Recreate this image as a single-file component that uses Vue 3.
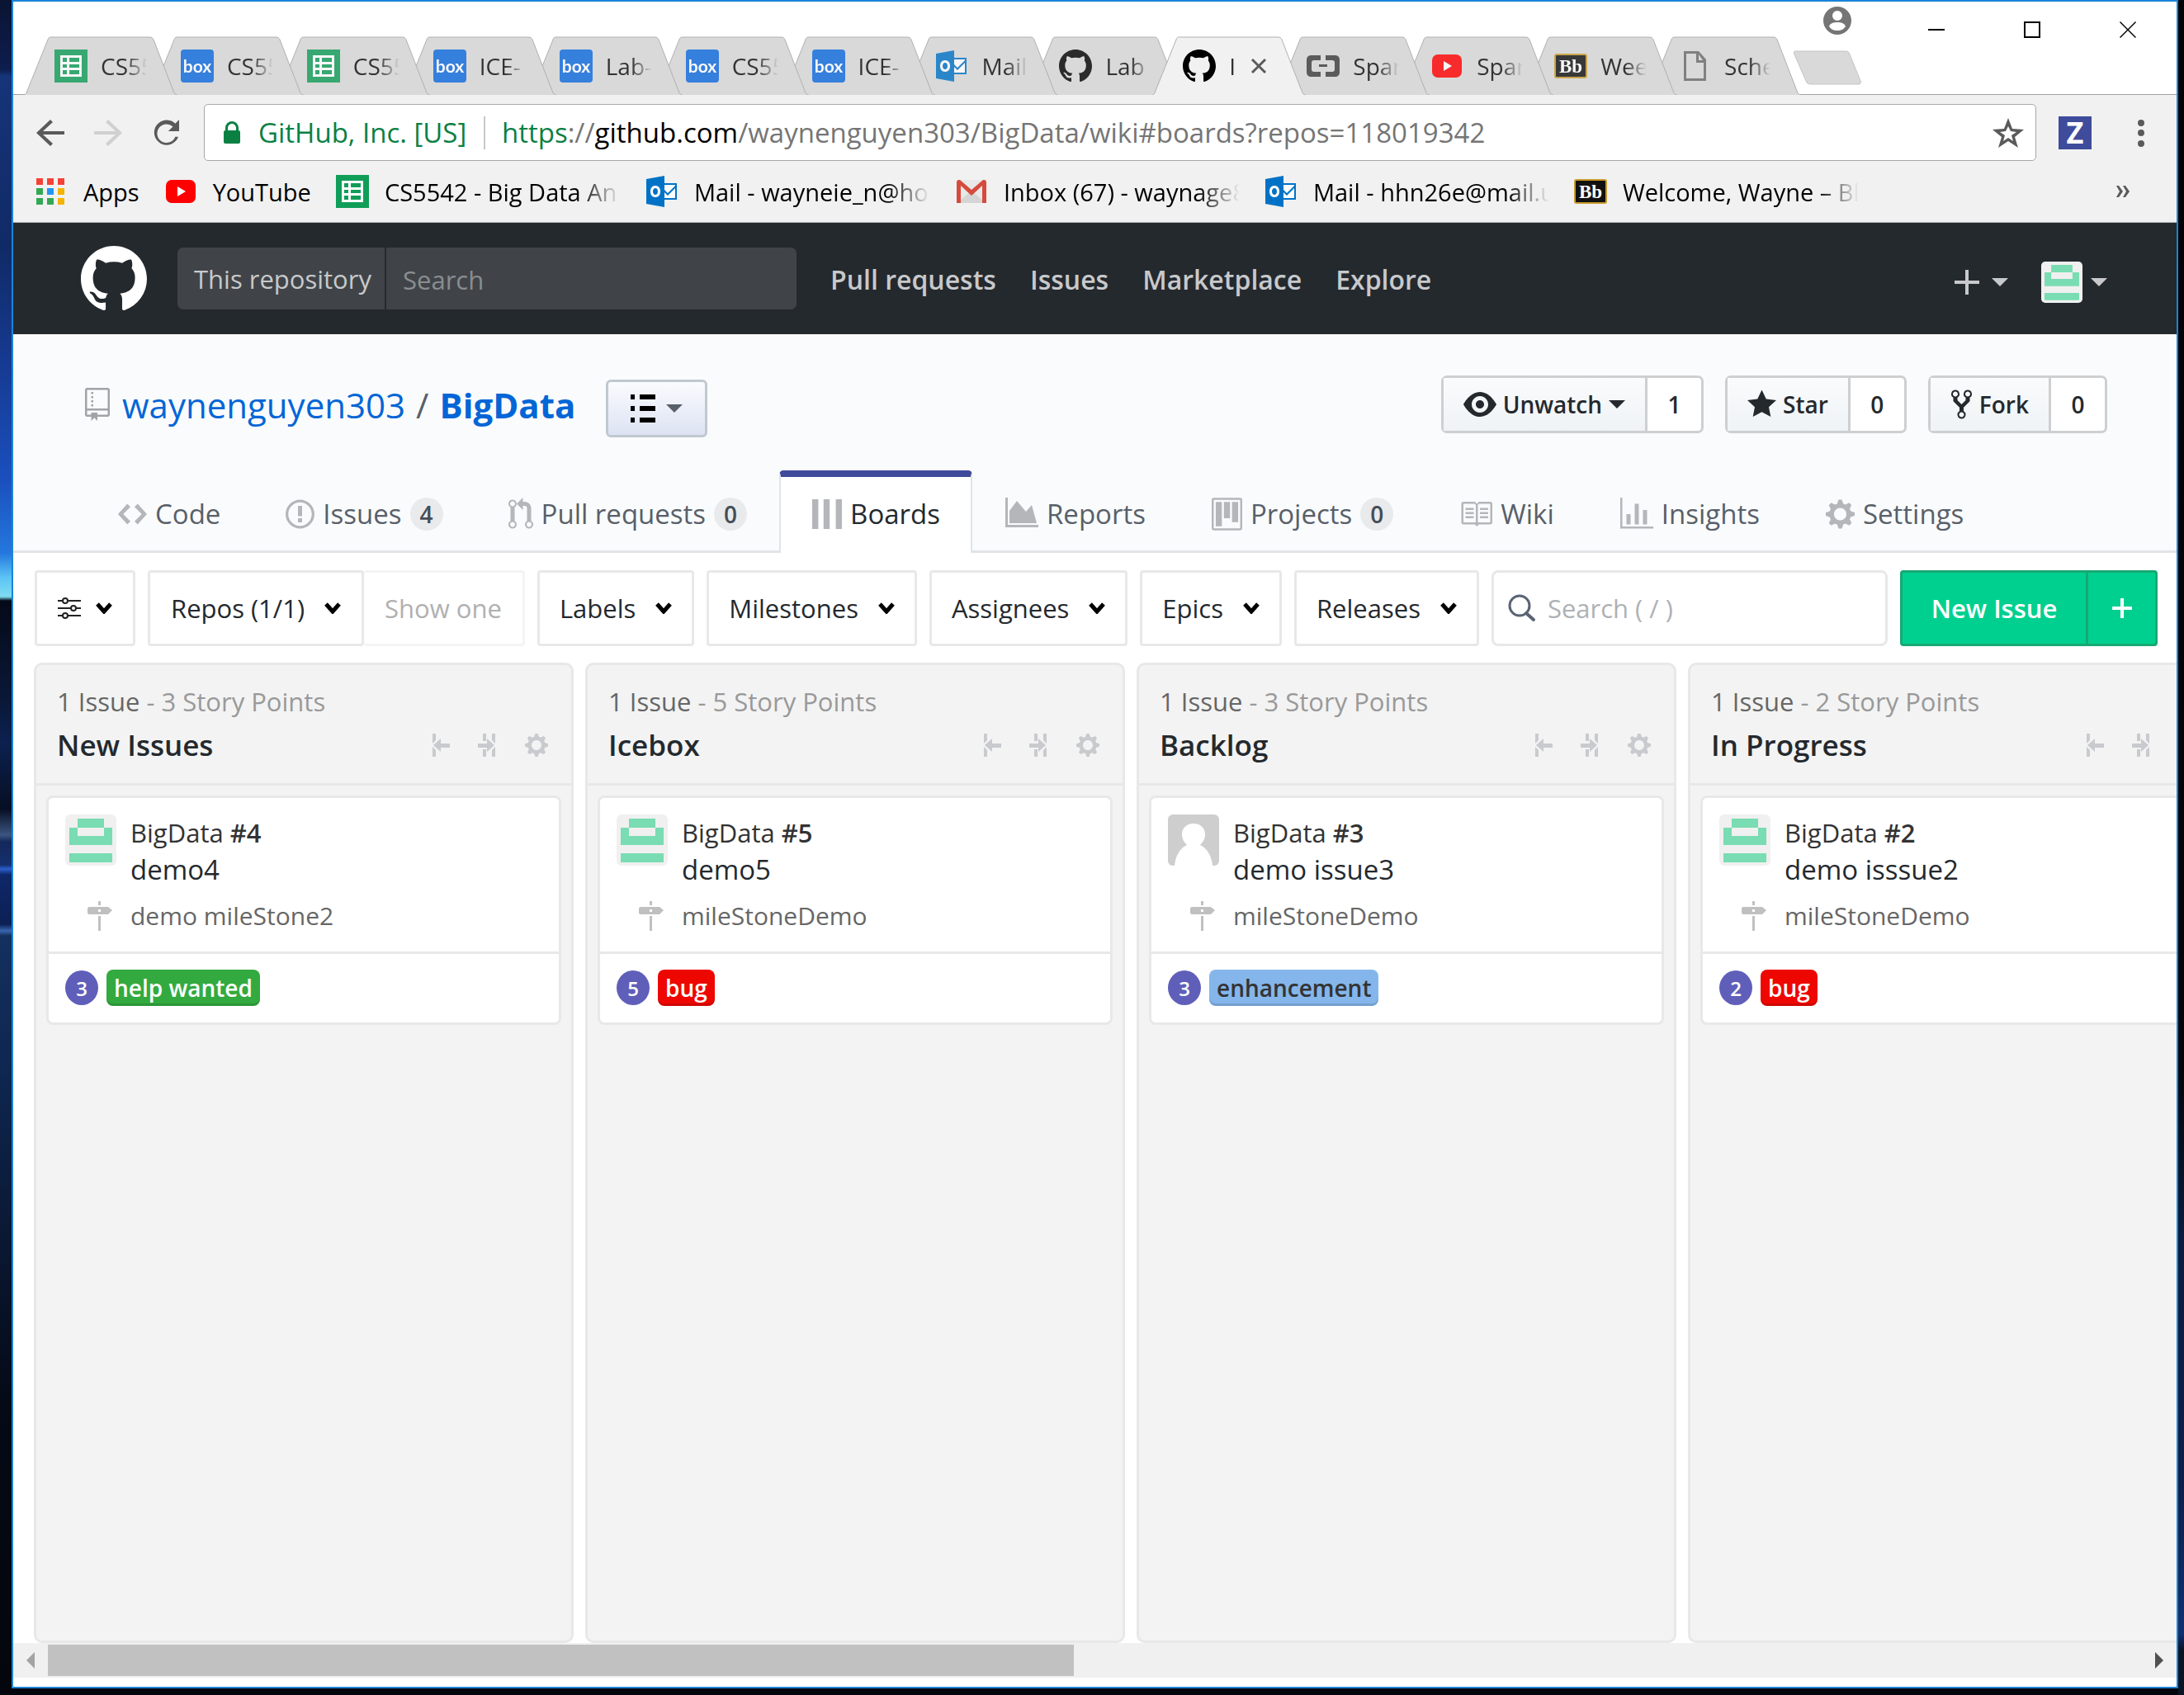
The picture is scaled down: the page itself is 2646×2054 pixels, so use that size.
<script setup>
import { h } from 'vue'

const shapes = {
  github: ['0 0 16 16', 'M8 0C3.58 0 0 3.58 0 8c0 3.54 2.29 6.53 5.47 7.59.4.07.55-.17.55-.38 0-.19-.01-.82-.01-1.49-2.01.37-2.53-.49-2.69-.94-.09-.23-.48-.94-.82-1.13-.28-.15-.68-.52-.01-.53.63-.01 1.08.58 1.23.82.72 1.21 1.87.87 2.33.66.07-.52.28-.87.51-1.07-1.78-.2-3.64-.89-3.64-3.95 0-.87.31-1.59.82-2.15-.08-.2-.36-1.02.08-2.12 0 0 .67-.21 2.2.82.64-.18 1.32-.27 2-.27.68 0 1.36.09 2 .27 1.53-1.04 2.2-.82 2.2-.82.44 1.1.16 1.92.08 2.12.51.56.82 1.27.82 2.15 0 3.07-1.87 3.75-3.65 3.95.29.25.54.73.54 1.48 0 1.07-.01 1.93-.01 2.2 0 .21.15.46.55.38A8.013 8.013 0 0 0 16 8c0-4.42-3.58-8-8-8z'],
  repo: ['0 0 12 16', 'M4 9H3V8h1v1zm0-3H3v1h1V6zm0-2H3v1h1V4zm0-2H3v1h1V2zm8-1v12c0 .55-.45 1-1 1H6v2l-1.5-1.5L3 16v-2H1c-.55 0-1-.45-1-1V1c0-.55.45-1 1-1h10c.55 0 1 .45 1 1zm-1 10H1v2h2v-1h3v1h5v-2zm0-10H1v9h10V1z'],
  eye: ['0 0 16 16', 'M8.06 2C3 2 0 8 0 8s3 6 8.06 6C13 14 16 8 16 8s-3-6-7.94-6zM8 12c-2.2 0-4-1.78-4-4 0-2.2 1.8-4 4-4 2.22 0 4 1.8 4 4 0 2.22-1.78 4-4 4zm2-4c0 1.11-.89 2-2 2-1.11 0-2-.89-2-2 0-1.11.89-2 2-2 1.11 0 2 .89 2 2z'],
  star: ['0 0 14 16', 'M14 6l-4.9-.64L7 1 4.9 5.36 0 6l3.6 3.26L2.67 14 7 11.67 11.33 14l-.93-4.74z'],
  fork: ['0 0 10 16', 'M8 1a1.993 1.993 0 0 0-1 3.72V6L5 8 3 6V4.72A1.993 1.993 0 0 0 2 1a1.993 1.993 0 0 0-1 3.72V6.5l3 3v1.78A1.993 1.993 0 0 0 5 15a1.993 1.993 0 0 0 1-3.72V9.5l3-3V4.72A1.993 1.993 0 0 0 8 1zM2 4.2C1.34 4.2.8 3.65.8 3c0-.65.55-1.2 1.2-1.2.65 0 1.2.55 1.2 1.2 0 .65-.55 1.2-1.2 1.2zm3 10c-.66 0-1.2-.55-1.2-1.2 0-.65.55-1.2 1.2-1.2.65 0 1.2.55 1.2 1.2 0 .65-.55 1.2-1.2 1.2zm3-10c-.66 0-1.2-.55-1.2-1.2 0-.65.55-1.2 1.2-1.2.65 0 1.2.55 1.2 1.2 0 .65-.55 1.2-1.2 1.2z'],
  code: ['0 0 14 16', 'M9.5 3L8 4.5 11.5 8 8 11.5 9.5 13 14 8 9.5 3zm-5 0L0 8l4.5 5L6 11.5 2.5 8 6 4.5 4.5 3z'],
  issue: ['0 0 14 16', 'M7 2.3c3.14 0 5.7 2.56 5.7 5.7s-2.56 5.7-5.7 5.7A5.71 5.71 0 0 1 1.3 8c0-3.14 2.56-5.7 5.7-5.7zM7 1C3.14 1 0 4.14 0 8s3.14 7 7 7 7-3.14 7-7-3.14-7-7-7zm1 3H6v5h2V4zm0 6H6v2h2v-2z'],
  pull: ['0 0 12 16', 'M11 11.28V5c-.03-.78-.34-1.47-.94-2.06C9.46 2.35 8.78 2.03 8 2H7V0L4 3l3 3V4h1c.27.02.48.11.69.31.21.2.3.42.31.69v6.28A1.993 1.993 0 0 0 10 15a1.993 1.993 0 0 0 1-3.72zm-1 2.92c-.66 0-1.2-.55-1.2-1.2 0-.65.55-1.2 1.2-1.2.65 0 1.2.55 1.2 1.2 0 .65-.55 1.2-1.2 1.2zM4 3c0-1.11-.89-2-2-2a1.993 1.993 0 0 0-1 3.72v6.56A1.993 1.993 0 0 0 2 15a1.993 1.993 0 0 0 1-3.72V4.72c.59-.34 1-.98 1-1.72zm-.8 10c0 .66-.55 1.2-1.2 1.2-.65 0-1.2-.55-1.2-1.2 0-.65.55-1.2 1.2-1.2.65 0 1.2.55 1.2 1.2zM2 4.2C1.34 4.2.8 3.65.8 3c0-.65.55-1.2 1.2-1.2.65 0 1.2.55 1.2 1.2 0 .65-.55 1.2-1.2 1.2z'],
  boards: ['0 0 34 34', 'M0 0h7v34H0zM13 0h7v34h-7zM27 0h7v34h-7z'],
  reports: ['0 0 40 40', 'M0 0h3v33h37v3H0zM5 31V16L14 4l11 13 7-8 6 22z'],
  project: ['0 0 15 16', 'M10 12h3V2h-3v10zm-4-2h3V2H6v8zm-4 4h3V2H2v12zm-1 1h13V1H1v14zM14 0H1a1 1 0 0 0-1 1v14a1 1 0 0 0 1 1h13a1 1 0 0 0 1-1V1a1 1 0 0 0-1-1z'],
  book: ['0 0 16 16', 'M3 5h4v1H3V5zm0 3h4V7H3v1zm0 2h4V9H3v1zm11-5h-4v1h4V5zm0 2h-4v1h4V7zm0 2h-4v1h4V9zm2-6v9c0 .55-.45 1-1 1H9.5l-1 1-1-1H2c-.55 0-1-.45-1-1V3c0-.55.45-1 1-1h5.5l1 1 1-1H15c.55 0 1 .45 1 1zm-8 .5L7.5 3H2v9h6V3.5zm7-.5H9.5l-.5.5V12h6V3z'],
  graph: ['0 0 16 16', 'M16 14v1H0V0h1v14h15zM5 13H3V8h2v5zm4 0H7V3h2v10zm4 0h-2V6h2v7z'],
  gear: ['0 0 14 16', 'M14 8.77v-1.6l-1.94-.64-.45-1.09.88-1.84-1.13-1.13-1.81.91-1.09-.45-.69-1.92h-1.6l-.63 1.94-1.11.45-1.84-.88-1.13 1.13.91 1.81-.45 1.09L0 7.23v1.59l1.94.64.45 1.09-.88 1.84 1.13 1.13 1.81-.91 1.09.45.69 1.92h1.59l.63-1.94 1.11-.45 1.84.88 1.13-1.13-.92-1.81.47-1.09L14 8.75v.02zM7 11c-1.66 0-3-1.34-3-3s1.34-3 3-3 3 1.34 3 3-1.34 3-3 3z'],
  milestone: ['0 0 30 36', 'M13 0h3v5h-3zM13 18h3v18h-3zM2 7h23l5 4-5 5H2c-1 0-2-1-2-2V9c0-1 1-2 2-2zM13 10v3h3v-3z'],
  caret: ['0 0 20 10', 'M0 0h20L10 10z'],
  list: ['0 0 30 36', 'M0 1h5v6H0zM11 1h19v6H11zM0 15h5v6H0zM11 15h19v6H11zM0 29h5v6H0zM11 29h19v6H11z'],
  plus: ['0 0 30 30', 'M13 0h4v13h13v4H17v13h-4V17H0v-4h13z'],
  collapse: ['0 0 22 28', 'M1 0h4v8l-4 4zM1 28h4v-8l-4-4zM2 14l9-8v6h11v5H11v5z'],
  expand: ['0 0 22 28', 'M6 0h4v9H6zM6 28h4v-9H6zM17 0h4v12l-4-4zM17 28h4V16l-4 4zM0 12h11V6l9 8-9 8v-5H0z'],
  lock: ['0 0 20 27', 'M2 11V8a8 8 0 0 1 16 0v3a2 2 0 0 1 2 2v12a2 2 0 0 1-2 2H2a2 2 0 0 1-2-2V13a2 2 0 0 1 2-2zM5 11h10V8A5 5 0 0 0 5 8z'],
  back: ['0 0 34 32', 'M17 0l3 3L8 14h26v4H8l12 11-3 3L0 16z'],
  forward: ['0 0 34 32', 'M17 0l-3 3 12 11H0v4h26L14 29l3 3 17-16z'],
  reload: ['0 0 36 34', 'M30 5l5-5v15H21l6-6a12 12 0 1 0 3 13h4A16 16 0 1 1 30 5z'],
  favourite: ['0 0 38 36', 'M19 0l5 13 14 1-11 9 4 13-12-8-12 8 4-13L0 14l14-1zM19 10l-3 6-7 1 6 4-2 7 6-4 6 4-2-7 6-4-7-1z'],
  user: ['0 0 34 34', 'M17 0a17 17 0 1 0 0 34 17 17 0 0 0 0-34zM17 5a6 6 0 0 1 0 12 6 6 0 0 1 0-12zM17 29c-5 0-8-2-10-5 1-4 6-5 10-5s9 1 10 5c-2 3-5 5-10 5z'],
  minimise: ['0 0 22 22', 'M1 10h20v2H1z'],
  maximise: ['0 0 22 22', 'M1 1h20v20H1zM3 3v16h16V3z'],
  close: ['0 0 22 22', 'M1 2l1-1 9 9 9-9 1 1-9 9 9 9-1 1-9-9-9 9-1-1 9-9z'],
  dots: ['0 0 8 34', 'M4 1a4 4 0 0 1 0 8 4 4 0 0 1 0-8zM4 13a4 4 0 0 1 0 8 4 4 0 0 1 0-8zM4 26a4 4 0 0 1 0 8 4 4 0 0 1 0-8z'],
  more: ['0 0 16 14', 'M0 0h3l5 7-5 7H0l4-7zM8 0h3l5 7-5 7H8l4-7z'],
  left: ['0 0 10 20', 'M10 0v20L0 10z'],
  right: ['0 0 10 20', 'M0 0v20l10-10z']
}

const Icon = ({ name }) =>
  h('svg', { viewBox: shapes[name][0], 'aria-hidden': 'true' }, [
    h('path', { d: shapes[name][1], fill: 'currentColor', 'fill-rule': name === 'expand' ? 'nonzero' : 'evenodd' })
  ])
Icon.props = ['name']

const Chevron = () =>
  h('svg', { viewBox: '0 0 20 14', width: 20, height: 14, 'aria-hidden': 'true' }, [
    h('path', { d: 'M2 2l8 9 8-9', fill: 'none', stroke: '#000', 'stroke-width': 5 })
  ])

const Identicon = () =>
  h('svg', { viewBox: '0 0 62 62', 'aria-hidden': 'true' }, [
    h('rect', { width: 62, height: 62, rx: 6, fill: '#f0f0f0' }),
    h('path', { d: 'M15 5h32v11h10v21H5V16h10zM15 16v10h32V16zM5 47h52v11H5z', fill: '#79dcb2', 'fill-rule': 'evenodd' })
  ])

const Person = () =>
  h('svg', { viewBox: '0 0 62 62', 'aria-hidden': 'true' }, [
    h('rect', { width: 62, height: 62, rx: 6, fill: '#cecece' }),
    h('path', { d: 'M31 11c9 0 14 6 14 13 0 6-3 10-6 13 9 4 14 14 15 25H8c1-11 6-21 15-25-3-3-6-7-6-13 0-7 5-13 14-13z', fill: '#fff' })
  ])

// Site icons shared by the tab strip and the bookmarks bar.
const svg = (...kids) => h('svg', { viewBox: '0 0 40 40', width: 40, height: 40, 'aria-hidden': 'true' }, kids)
const p = (d, fill) => h('path', { d, fill, 'fill-rule': 'evenodd' })
const label = (text, size, y, family, fill) =>
  h('text', { x: 20, y, 'text-anchor': 'middle', 'font-size': size, 'font-family': family, 'font-weight': 700, fill }, text)
const sites = {
  sheets: () => svg(p('M0 0h40v40H0z', '#0f9d58'), p('M7 7h26v26H7zM10 10v5h5v-5zM18 10v5h12v-5zM10 18v4h5v-4zM18 18v4h12v-4zM10 25v5h5v-5zM18 25v5h12v-5z', '#fff')),
  box: () => svg(h('rect', { width: 40, height: 40, rx: 4, fill: '#0d69de' }), label('box', 21, 28, 'Lato, sans-serif', '#fff')),
  outlook: () => svg(
    p('M20 10h18v20H20z', '#0072c6'), p('M22 12h14v1l-9 9-5-5zM22 20l5 5 9-9v12H22z', '#fff'),
    p('M1 5l22-4v38L1 35z', '#0072c6'), p('M12 13c4 0 6 3 6 7s-2 7-6 7-6-3-6-7 2-7 6-7zM12 16c-2 0-3 2-3 4s1 4 3 4 3-2 3-4-1-4-3-4z', '#fff')),
  github: () => svg(h('path', { d: shapes.github[1], fill: '#000', transform: 'scale(2.5)' })),
  brackets: () => svg(p('M6 7h11v6H9c-2 0-3 1-3 3v8c0 2 1 3 3 3h8v6H6c-4 0-6-2-6-6V13c0-4 2-6 6-6zM34 7H23v6h8c2 0 3 1 3 3v8c0 2-1 3-3 3h-8v6h11c4 0 6-2 6-6V13c0-4-2-6-6-6zM15 18h10v3H15z', '#3c3c3c')),
  youtube: () => svg(h('rect', { x: 2, y: 6, width: 36, height: 28, rx: 7, fill: '#f00' }), p('M16 14v12l10-6z', '#fff')),
  gmail: () => svg(
    p('M3 6h34v28H3z', '#e8e8e8'), p('M3 34l17-15 17 15z', '#d5d5d5'),
    p('M2 9c0-3 2-3 4-3l14 12L34 6c2 0 4 0 4 3v25h-5V13L20 25 7 13v21H2z', '#d54b3d')),
  blackboard: () => svg(
    h('rect', { x: 1, y: 6, width: 38, height: 28, rx: 2, fill: '#111', stroke: '#c99a2c', 'stroke-width': 2 }),
    label('Bb', 23, 28, '"Liberation Serif", serif', '#fff')),
  apps: () => svg(p('M2 4h8v8H2zM15 4h8v8h-8zM28 4h8v8h-8z', '#f44336'), p('M2 16h8v8H2zM2 28h8v8H2zM15 28h8v8h-8z', '#34a853'), p('M15 16h8v8h-8z', '#2196f3'), p('M28 16h8v8h-8zM28 28h8v8h-8z', '#f4b400')),
  page: () => svg(p('M7 2h18l9 10v26H7zM10 5v30h21V16h-9V5zM25 6v7h5z', '#6b6b6b'))
}

const tabs = [
  ['sheets', 'CS55'], ['box', 'CS55'], ['sheets', 'CS55'], ['box', 'ICE-'], ['box', 'Lab-'],
  ['box', 'CS55'], ['box', 'ICE-'], ['outlook', 'Mail'], ['github', 'Lab'], ['github', 'I'],
  ['brackets', 'Spar'], ['youtube', 'Spar'], ['blackboard', 'Wee'], ['page', 'Sche']
].map(([site, title], i) => ({ site, title, active: i === 9, z: i === 9 ? 20 : 14 - i }))

const bookmarks = [
  { site: 'apps', title: 'Apps' },
  { site: 'youtube', title: 'YouTube' },
  { site: 'sheets', title: 'CS5542 - Big Data An', fade: true },
  { site: 'outlook', title: 'Mail - wayneie_n@ho', fade: true },
  { site: 'gmail', title: 'Inbox (67) - waynage8', fade: true },
  { site: 'outlook', title: 'Mail - hhn26e@mail.u', fade: true },
  { site: 'blackboard', title: 'Welcome, Wayne – Bl', fade: true }
]

const repoTabs = [
  { icon: 'code', text: 'Code' },
  { icon: 'issue', text: 'Issues', count: 4 },
  { icon: 'pull', text: 'Pull requests', count: 0 },
  { icon: 'boards', text: 'Boards', active: true },
  { icon: 'reports', text: 'Reports' },
  { icon: 'project', text: 'Projects', count: 0 },
  { icon: 'book', text: 'Wiki' },
  { icon: 'graph', text: 'Insights' },
  { icon: 'gear', text: 'Settings' }
]

const social = [
  { icon: 'eye', text: 'Unwatch', count: 1, menu: true },
  { icon: 'star', text: 'Star', count: 0 },
  { icon: 'fork', text: 'Fork', count: 0 }
]

const filters = ['Labels', 'Milestones', 'Assignees', 'Epics', 'Releases']

const columns = [
  { name: 'New Issues', points: 3, number: 4, title: 'demo4', milestone: 'demo mileStone2', label: 'help wanted', tone: 'green' },
  { name: 'Icebox', points: 5, number: 5, title: 'demo5', milestone: 'mileStoneDemo', label: 'bug', tone: 'red' },
  { name: 'Backlog', points: 3, number: 3, title: 'demo issue3', milestone: 'mileStoneDemo', label: 'enhancement', tone: 'blue', person: true },
  { name: 'In Progress', points: 2, number: 2, title: 'demo isssue2', milestone: 'mileStoneDemo', label: 'bug', tone: 'red' }
]
</script>

<template>
  <div class="desktop">
    <div class="window">
      <div class="titlebar">
        <div class="tabs">
          <div v-for="(t, i) in tabs" :key="i" class="tab" :class="{ active: t.active }" :style="{ zIndex: t.z }">
            <svg class="tab-shape" viewBox="0 0 186 71" preserveAspectRatio="none" aria-hidden="true">
              <path d="M0 71C2 71 3 69 4 66L29 4C30 1 31 1 34 1H152C155 1 156 2 157 4L181 66C182 69 183 71 186 71" />
            </svg>
            <component :is="sites[t.site]" class="site" />
            <span class="tab-title">{{ t.title }}</span>
            <button v-if="t.active" class="tab-close" aria-label="Close tab">
              <svg viewBox="0 0 20 20" width="20" height="20"><path d="M2 2l16 16M18 2L2 18" stroke="#5a5a5a" stroke-width="3" /></svg>
            </button>
          </div>
        </div>
        <button class="new-tab" aria-label="New tab">
          <svg viewBox="0 0 84 42" width="84" height="42"><path d="M4 1h60c3 0 4 1 5 4l13 32c1 3 0 4-3 4H22c-3 0-5-1-6-4L2 5C1 2 1 1 4 1z" fill="#d9d9d9" stroke="#c4c4c4" /></svg>
        </button>
        <div class="window-buttons">
          <button class="profile" aria-label="Profile"><Icon name="user" /></button>
          <button aria-label="Minimise"><Icon name="minimise" /></button>
          <button aria-label="Maximise"><Icon name="maximise" /></button>
          <button aria-label="Close"><Icon name="close" /></button>
        </div>
      </div>

      <div class="toolbar">
        <button class="nav" aria-label="Back"><Icon name="back" /></button>
        <button class="nav disabled" aria-label="Forward" disabled><Icon name="forward" /></button>
        <button class="nav" aria-label="Reload"><Icon name="reload" /></button>
        <div class="omnibox">
          <Icon name="lock" class="lock" />
          <span class="owner">GitHub, Inc. [US]</span>
          <span class="url"><span class="secure">https</span>://<b>github.com</b>/waynenguyen303/BigData/wiki#boards?repos=118019342</span>
          <button class="favourite" aria-label="Bookmark this page"><Icon name="favourite" /></button>
        </div>
        <button class="zenhub" aria-label="ZenHub">Z</button>
        <button class="dots" aria-label="Menu"><Icon name="dots" /></button>
      </div>

      <nav class="bookmarks" aria-label="Bookmarks">
        <a v-for="(b, i) in bookmarks" :key="i" href="#" class="bookmark">
          <component :is="sites[b.site]" class="site" />
          <span :class="{ fade: b.fade }">{{ b.title }}</span>
        </a>
        <button class="more" aria-label="More bookmarks"><Icon name="more" /></button>
      </nav>

      <header class="site-header">
        <a href="#" class="logo" aria-label="GitHub"><Icon name="github" /></a>
        <div class="site-search">
          <label for="site-search">This repository</label>
          <input id="site-search" type="text" placeholder="Search" />
        </div>
        <nav class="site-nav">
          <a href="#">Pull requests</a>
          <a href="#">Issues</a>
          <a href="#">Marketplace</a>
          <a href="#">Explore</a>
        </nav>
        <button class="create" aria-label="Create new"><Icon name="plus" class="plus" /><Icon name="caret" class="caret" /></button>
        <button class="account" aria-label="Account"><Identicon class="face" /><Icon name="caret" class="caret" /></button>
      </header>

      <section class="repo">
        <div class="repo-row">
          <Icon name="repo" class="repo-icon" />
          <h1><a href="#">waynenguyen303</a><span>/</span><a href="#"><strong>BigData</strong></a></h1>
          <button class="repo-menu" aria-label="Repository list"><Icon name="list" class="list" /><Icon name="caret" class="caret" /></button>
          <div class="social">
            <div v-for="s in social" :key="s.text" class="pair">
              <button><Icon :name="s.icon" :class="['social-icon', s.icon]" />{{ s.text }}<Icon v-if="s.menu" name="caret" class="caret" /></button>
              <a href="#">{{ s.count }}</a>
            </div>
          </div>
        </div>
        <nav class="repo-tabs">
          <a v-for="t in repoTabs" :key="t.text" href="#" :class="{ active: t.active }">
            <Icon :name="t.icon" :class="['tab-icon', t.icon]" /><span>{{ t.text }}</span>
            <span v-if="t.count !== undefined" class="count">{{ t.count }}</span>
          </a>
        </nav>
      </section>

      <div class="filters">
        <button class="filter view" aria-label="View options">
          <svg viewBox="0 0 28 28" width="28" height="28" aria-hidden="true">
            <path d="M0 5h28M0 14h28M0 23h28" stroke="#222" stroke-width="2" />
            <g fill="#fff" stroke="#222" stroke-width="2"><circle cx="9" cy="5" r="3" /><circle cx="19" cy="14" r="3" /><circle cx="9" cy="23" r="3" /></g>
          </svg>
          <Chevron />
        </button>
        <div class="repos">
          <button class="filter">Repos (1/1)<Chevron /></button>
          <button class="filter show-one" disabled>Show one</button>
        </div>
        <button v-for="f in filters" :key="f" class="filter">{{ f }}<Chevron /></button>
        <label class="board-search">
          <svg viewBox="0 0 34 34" width="34" height="34" aria-hidden="true"><circle cx="14" cy="14" r="12" fill="none" stroke="#5a6475" stroke-width="3" /><path d="M22 23l9 8" stroke="#5a6475" stroke-width="4" stroke-linecap="round" /></svg>
          <input type="text" placeholder="Search ( / )" aria-label="Search issues" />
        </label>
        <div class="new-issue">
          <button>New Issue</button>
          <button aria-label="More new issue options"><svg viewBox="0 0 24 24" width="24" height="24"><path d="M12 0v24M0 12h24" stroke="#fff" stroke-width="4" /></svg></button>
        </div>
      </div>

      <main class="board">
        <section v-for="c in columns" :key="c.name" class="column">
          <header>
            <p class="summary">1 Issue <span>- {{ c.points }} Story Points</span></p>
            <div class="column-title">
              <h2>{{ c.name }}</h2>
              <button aria-label="Collapse"><Icon name="collapse" class="move" /></button>
              <button aria-label="Move"><Icon name="expand" class="move" /></button>
              <button aria-label="Column settings"><Icon name="gear" class="cog" /></button>
            </div>
          </header>
          <article class="card">
            <div class="card-body">
              <component :is="c.person ? Person : Identicon" class="avatar" />
              <div>
                <p class="ref">BigData <b>#{{ c.number }}</b></p>
                <h3>{{ c.title }}</h3>
              </div>
            </div>
            <p class="milestone"><Icon name="milestone" class="post" />{{ c.milestone }}</p>
            <footer>
              <span class="points">{{ c.points }}</span>
              <span class="label" :class="c.tone">{{ c.label }}</span>
            </footer>
          </article>
        </section>
      </main>

      <div class="scrollbar">
        <button aria-label="Scroll left" class="off"><Icon name="left" /></button>
        <div class="track"><div class="thumb"></div></div>
        <button aria-label="Scroll right"><Icon name="right" /></button>
      </div>
    </div>
  </div>
</template>

<style>
body {
  margin: 0;
  background: #050a14;
}
</style>

<style scoped>
* {
  box-sizing: border-box;
  margin: 0;
}
.desktop {
  display: flex;
  min-height: 100vh;
  padding: 0 7px 8px 14px;
  font-family: "Open Sans", "Noto Sans", sans-serif;
  font-size: 33px;
  color: #24292e;
  background:
    linear-gradient(180deg, #020305 0, #04060c 1300px, #0b1c3c 1500px, #0c1f4a 1800px, #12306e 1980px, #0a1424 2000px) right / 7px 100% no-repeat,
    linear-gradient(180deg, #0a1433 0, #0d1d4d 84px, #16347a 92px, #102a66 300px, #163a92 440px, #1a4fbd 580px, #2477dd 670px, #5cc4f5 700px, #7fdcf2 723px, #040a18 728px, #0a1838 850px, #0c2150 900px, #060e22 980px, #3a5580 1012px, #14285a 1020px, #15306e 1048px, #2b5fd0 1053px, #0e2768 1060px, #0c2055 1120px, #3a66b0 1128px, #14305e 1134px, #0e2650 1300px, #0a1833 1500px, #040a16 1700px, #03060c 100%);
}
button {
  padding: 0;
  border: 0;
  background: none;
  font: inherit;
  color: inherit;
}
a {
  color: inherit;
  text-decoration: none;
}
svg {
  display: block;
  flex: none;
}
.window {
  display: flex;
  flex: 1;
  flex-direction: column;
  min-width: 0;
  overflow: hidden;
  border: 2px solid #1a84d8;
  background: #fff;
}

/* tab strip */
.titlebar {
  position: relative;
  display: flex;
  height: 113px;
  padding: 42px 0 0 13px;
  border-bottom: 1px solid #a0a0a0;
}
.tabs {
  display: grid;
  grid-template-columns: repeat(6, 153fr) repeat(8, 150fr);
  flex: 0 1 2117px;
}
.tab {
  position: relative;
  display: flex;
  align-items: center;
  min-width: 0;
  height: 71px;
  padding-left: 37px;
  font-size: 28px;
  color: #333;
}
.tab-shape {
  position: absolute;
  top: 0;
  left: 0;
  width: 186px;
  height: 71px;
  fill: #d9d9d9;
  stroke: #b0b0b0;
}
.tab.active .tab-shape {
  fill: #f1f1f1;
}
.tab .site {
  position: relative;
  opacity: 0.8;
}
.tab.active .site {
  opacity: 1;
}
.tab-title {
  position: relative;
  flex: none;
  width: 56px;
  margin-left: 16px;
  overflow: hidden;
  white-space: nowrap;
  mask-image: linear-gradient(90deg, #000 55%, transparent);
}
.tab.active .tab-title {
  width: 12px;
}
.tab-close {
  position: relative;
  margin-left: 14px;
}
.new-tab {
  align-self: flex-start;
  margin: 17px 0 0 26px;
}
.window-buttons {
  position: absolute;
  top: 23px;
  right: 48px;
  display: flex;
  gap: 94px;
}
.window-buttons button {
  display: flex;
  height: 22px;
  color: #000;
}
.window-buttons svg {
  width: 22px;
  height: 22px;
}
.window-buttons .profile {
  height: 34px;
  margin-top: -17px;
  margin-right: -2px;
  color: #757575;
}
.window-buttons .profile svg {
  width: 34px;
  height: 34px;
}

/* address bar */
.toolbar {
  display: flex;
  align-items: center;
  padding: 11px 39px 0 28px;
  background: #f1f1f1;
}
.nav {
  margin-right: 36px;
  color: #5a5a5a;
}
.nav svg {
  width: 34px;
  height: 32px;
}
.nav.disabled {
  color: #d0d0d0;
}
.nav:nth-child(3) {
  margin-right: 29px;
}
.omnibox {
  display: flex;
  flex: 1;
  align-items: center;
  height: 69px;
  padding: 0 14px 0 23px;
  border: 1px solid #a8a8a8;
  border-radius: 5px;
  background: #fff;
  white-space: nowrap;
}
.lock {
  width: 20px;
  height: 27px;
  color: #0b8043;
}
.owner {
  width: 275px;
  margin-left: 22px;
  line-height: 40px;
  border-right: 2px solid #c8c8c8;
  color: #0b8043;
}
.url {
  margin-left: 20px;
  color: #757575;
}
.url b {
  font-weight: 400;
  color: #000;
}
.secure {
  color: #0b8043;
}
.favourite {
  margin-left: auto;
  color: #5a5a5a;
}
.favourite svg {
  width: 38px;
  height: 36px;
}
.zenhub {
  width: 40px;
  height: 40px;
  margin: 0 56px 0 27px;
  background: #3f4c9b;
  font-size: 36px;
  font-weight: 700;
  line-height: 40px;
  color: #fff;
}
.dots svg {
  width: 8px;
  height: 34px;
  color: #5a5a5a;
}

/* bookmarks */
.bookmarks {
  display: flex;
  gap: 30px;
  align-items: center;
  height: 75px;
  padding: 0 57px 0 26px;
  border-bottom: 1px solid #b4b4b4;
  background: #f1f1f1;
  font-size: 29px;
  color: #000;
}
.bookmark {
  display: flex;
  gap: 19px;
  align-items: center;
}
.fade {
  width: 286px;
  overflow: hidden;
  white-space: nowrap;
  mask-image: linear-gradient(90deg, #000 82%, transparent);
}
.more {
  margin-left: auto;
  color: #5a5a5a;
}
.more svg {
  width: 16px;
  height: 14px;
}

/* site header */
.site-header {
  display: flex;
  align-items: center;
  height: 135px;
  padding: 0 84px 0 82px;
  background: #24292e;
  color: #c8c9cb;
}
.logo svg {
  width: 80px;
  height: 80px;
  color: #fff;
}
.site-search {
  display: flex;
  width: 750px;
  height: 75px;
  margin-left: 37px;
  border-radius: 7px;
  overflow: hidden;
  background: #404448;
  font-size: 31px;
}
.site-search label {
  width: 253px;
  padding-left: 20px;
  border-right: 2px solid #24292e;
  line-height: 77px;
  white-space: nowrap;
}
.site-search input {
  flex: 1;
  min-width: 0;
  padding: 2px 20px 0;
  border: 0;
  background: none;
  font: inherit;
}
.site-search input::placeholder {
  color: #8a8d90;
}
.site-nav {
  display: flex;
  gap: 41px;
  margin-left: 41px;
  padding-top: 2px;
  font-size: 32px;
  font-weight: 600;
}
.caret {
  width: 20px;
  height: 10px;
}
.create,
.account {
  display: flex;
  align-items: center;
}
.create {
  gap: 15px;
  margin: 8px 40px 0 auto;
}
.plus {
  width: 30px;
  height: 30px;
}
.account {
  gap: 10px;
  margin-top: 8px;
}
.face {
  width: 50px;
  height: 50px;
}

/* repository heading */
.repo {
  padding-top: 50px;
  background: #fafbfc;
}
.repo-row {
  display: flex;
  align-items: center;
  height: 70px;
  padding: 0 84px 0 87px;
}
.repo-icon {
  width: 30px;
  height: 40px;
  color: #a0a4a8;
}
h1 {
  display: flex;
  gap: 13px;
  margin-left: 15px;
  font-size: 42px;
  font-weight: 400;
  color: #0366d6;
}
h1 span {
  color: #586069;
}
.repo-menu {
  display: flex;
  gap: 13px;
  align-items: center;
  justify-content: center;
  width: 123px;
  height: 70px;
  margin: 10px 0 0 37px;
  border: 3px solid #c0c8d0;
  border-radius: 6px;
  background: linear-gradient(#fafbfe, #dde3f3);
  color: #586069;
}
.list {
  width: 30px;
  height: 36px;
  color: #000;
}
.social {
  display: flex;
  gap: 26px;
  margin-left: auto;
  font-size: 28px;
  font-weight: 600;
}
.pair {
  display: flex;
  height: 70px;
  border: 3px solid #cdcfd1;
  border-radius: 7px;
  background: #fff;
}
.pair button {
  display: flex;
  gap: 8px;
  align-items: center;
  padding: 0 24px;
  border-right: 3px solid #cdcfd1;
  background: linear-gradient(#fafbfc, #eff3f6);
}
.pair a {
  min-width: 65px;
  line-height: 64px;
  text-align: center;
}
.social-icon {
  width: 40px;
  height: 40px;
}
.social-icon.star {
  width: 35px;
}
.social-icon.fork {
  width: 27px;
}
.repo-tabs {
  display: flex;
  margin-top: 45px;
  padding-left: 87px;
  box-shadow: inset 0 -3px #e1e4e8;
  color: #586069;
}
.repo-tabs a {
  display: flex;
  gap: 10px;
  align-items: center;
  height: 100px;
  padding: 8px 37px 3px 38px;
  border: solid transparent;
  border-width: 0 2px;
}
.repo-tabs .active {
  padding-top: 0;
  border: 3px solid #e1e4e8;
  border-width: 8px 2px 0;
  border-top-color: #3f4a9b;
  border-radius: 5px 5px 0 0;
  background: #fff;
  color: #24292e;
}
.repo-tabs .active ~ a {
  padding-right: 38px;
}
.tab-icon {
  width: 35px;
  height: 40px;
  color: #b4b6b9;
}
.tab-icon.pull {
  width: 30px;
}
.tab-icon.boards {
  width: 36px;
}
.tab-icon.reports,
.tab-icon.book,
.tab-icon.graph {
  width: 40px;
}
.tab-icon.project {
  width: 37px;
}
.count {
  min-width: 40px;
  padding: 0 12px;
  border-radius: 20px;
  background: #e8eaec;
  font-size: 28px;
  font-weight: 600;
  line-height: 40px;
  text-align: center;
  color: #444d56;
}

/* filters */
.filters {
  display: flex;
  gap: 15px;
  padding: 21px 23px 20px 26px;
  font-size: 31px;
}
.filter {
  display: flex;
  gap: 24px;
  align-items: center;
  height: 92px;
  padding: 0 24px;
  border: 3px solid #e8e8e8;
  border-radius: 4px;
  background: #fff;
  white-space: nowrap;
}
.view {
  gap: 18px;
  padding: 0 25px;
}
.repos {
  display: flex;
}
.repos .filter {
  padding: 0 25px;
}
.repos .show-one {
  border-color: #f4f4f4;
  border-left: 0;
  color: #b0b0b0;
}
.board-search {
  display: flex;
  flex: 1;
  gap: 14px;
  align-items: center;
  min-width: 0;
  padding-left: 17px;
  border: 3px solid #e8e8e8;
  border-radius: 8px;
}
.board-search input {
  flex: 1;
  min-width: 0;
  padding: 0;
  border: 0;
  background: none;
  font: inherit;
}
.board-search input::placeholder {
  color: #aeb1b5;
}
.new-issue {
  display: flex;
  border: 3px solid #16a974;
  border-radius: 4px;
  background: #00d08f;
  font-weight: 600;
  color: #fff;
}
.new-issue button {
  width: 222px;
}
.new-issue button + button {
  display: flex;
  align-items: center;
  justify-content: center;
  width: 84px;
  border-left: 3px solid #16a974;
}

/* board */
.board {
  display: flex;
  flex: 1;
  gap: 14px;
  padding-left: 25px;
  overflow: hidden;
}
.column {
  flex: 0 0 654px;
  border: 3px solid #e8e8e8;
  border-radius: 10px;
  background: #f3f3f3;
}
.column > header {
  padding: 23px 27px 20px 25px;
  border-bottom: 3px solid #e8e8e8;
}
.summary {
  margin-bottom: 6px;
  font-size: 31px;
  line-height: 42px;
  color: #666;
}
.summary span {
  color: #999;
}
.column-title {
  display: flex;
  gap: 34px;
  align-items: center;
  color: #c8cace;
}
h2 {
  flex: 1;
  font-size: 35px;
  font-weight: 600;
  line-height: 52px;
  color: #24292e;
}
.move {
  width: 22px;
  height: 28px;
}
.cog {
  width: 30px;
  height: 32px;
}
.card {
  margin: 12px;
  border: 3px solid #e8e8e8;
  border-radius: 8px;
  background: #fff;
}
.card-body {
  display: flex;
  gap: 17px;
  padding: 20px 20px 0;
}
.avatar {
  width: 62px;
  height: 62px;
}
.ref {
  font-size: 31px;
  line-height: 44px;
  color: #333;
}
.ref b {
  font-weight: 600;
}
h3 {
  font-size: 33px;
  font-weight: 400;
  line-height: 46px;
}
.milestone {
  display: flex;
  gap: 22px;
  align-items: center;
  padding: 12px 20px 22px 47px;
  border-bottom: 3px solid #e8e8e8;
  font-size: 30px;
  line-height: 42px;
  color: #666;
}
.post {
  width: 30px;
  height: 36px;
  color: #c0c0c0;
}
.card footer {
  display: flex;
  gap: 10px;
  align-items: center;
  padding: 19px 20px 20px;
}
.points {
  width: 40px;
  height: 42px;
  border-radius: 50%;
  background: #5f5fba;
  font-size: 24px;
  font-weight: 600;
  line-height: 44px;
  text-align: center;
  color: #fff;
}
.label {
  padding: 0 9px;
  border-radius: 8px;
  box-shadow: inset 0 -3px rgba(0, 0, 0, 0.12);
  font-size: 28px;
  font-weight: 600;
  line-height: 44px;
  color: #fff;
}
.green {
  background: #33aa3f;
}
.red {
  background: #ee0701;
}
.blue {
  background: #84b6eb;
  color: #333;
}

/* scrollbar */
.scrollbar {
  display: flex;
  height: 42px;
  margin-bottom: 11px;
  background: #f0f0f0;
}
.scrollbar button {
  display: flex;
  align-items: center;
  justify-content: center;
  width: 42px;
  color: #505050;
}
.scrollbar .off {
  color: #a3a3a3;
}
.scrollbar svg {
  width: 10px;
  height: 20px;
}
.track {
  flex: 1;
  padding: 2px 0;
}
.thumb {
  width: 49%;
  height: 38px;
  background: #c1c1c1;
}
</style>
